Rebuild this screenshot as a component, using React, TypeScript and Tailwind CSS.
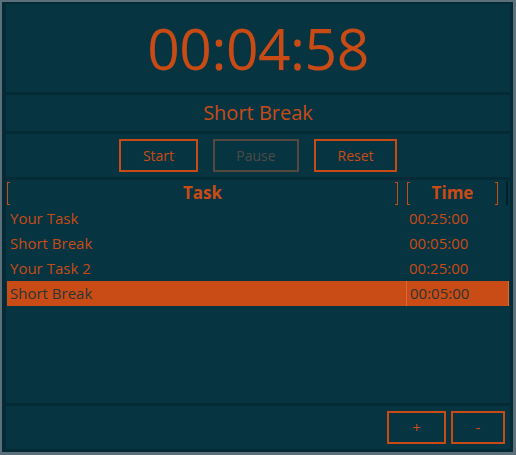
const tasks = [
  { name: "Your Task", time: "00:25:00" },
  { name: "Short Break", time: "00:05:00" },
  { name: "Your Task 2", time: "00:25:00" },
  { name: "Short Break", time: "00:05:00" },
]

const selected = 3

// header cell with the bracket-like separators of the column header
const HeaderCell = ({ label, className }: { label: string; className: string }) => (
  <div className={`relative flex items-center justify-center ${className}`}>
    <div className="absolute left-0 top-[2px] bottom-[1px] w-[3px] border-l border-t border-b border-[#c84b16]" />
    <span className="font-bold text-[17px] text-[#c84b16]">{label}</span>
    <div className="absolute right-0 top-[2px] bottom-[1px] w-[3px] border-r border-t border-b border-[#c84b16]" />
  </div>
)

const App = () => {
  return (
    <div
      className="w-[516px] h-[455px] bg-[#042a35] border-l-2 border-t-2 border-r-[3px] border-b-[3px] border-[#5c707b] pl-1 pt-[2px] pr-[3px] pb-[3px] flex flex-col gap-[3px]"
      style={{ fontFamily: '"Open Sans", "Noto Sans", sans-serif' }}
    >
      {/* Timer */}
      <div className="h-[88px] bg-[#073441] flex items-center justify-center">
        <span className="text-[57px] leading-none font-medium tracking-[-0.5px] text-[#c84b16]">00:04:58</span>
      </div>

      {/* Current phase */}
      <div className="h-[36px] bg-[#073441] flex items-center justify-center">
        <span className="text-[20px] font-medium text-[#c84b16]">Short Break</span>
      </div>

      {/* Controls */}
      <div className="h-[43px] bg-[#073441] flex items-center justify-center gap-[15px]">
        <button className="w-[79px] h-[33px] border-2 border-[#c84b16] text-[14px] text-[#c84b16]">Start</button>
        <button className="w-[86px] h-[33px] border-2 border-[#56483f] text-[14px] text-[#4d4b45]">Pause</button>
        <button className="w-[83px] h-[33px] border-2 border-[#c84b16] text-[14px] text-[#c84b16]">Reset</button>
      </div>

      {/* Task list */}
      <div className="h-[223px] bg-[#073441] px-px">
        <div className="h-[26px] flex">
          <HeaderCell label="Task" className="w-[391px]" />
          <div className="w-[9px]" />
          <HeaderCell label="Time" className="w-[91px]" />
          <div className="flex-1 flex justify-end pr-[1px]">
            <div className="w-[2px] mt-[1px] h-[24px] bg-[#02212b]" />
          </div>
        </div>
        {tasks.map((t, i) => (
          <div
            key={i}
            className={`h-[25px] flex items-center text-[15px] ${i === selected ? "bg-[#c94c17] text-[#2c3434]" : "text-[#c84b16]"}`}
          >
            <div className="w-[399px] pl-[3px]">{t.name}</div>
            <div className={`flex-1 h-full flex items-center pl-[3px] ${i === selected ? "border-l border-r border-[#d8693a]" : ""}`}>
              {t.time}
            </div>
          </div>
        ))}
      </div>

      {/* Add / remove */}
      <div className="h-[43px] bg-[#073441] flex items-center justify-end gap-[5px] pr-[5px]">
        <button className="w-[59px] h-[33px] border-2 border-[#c84b16] text-[15px] text-[#c84b16]">+</button>
        <button className="w-[54px] h-[33px] border-2 border-[#c84b16] text-[15px] text-[#c84b16]">-</button>
      </div>
    </div>
  )
}

export default App
